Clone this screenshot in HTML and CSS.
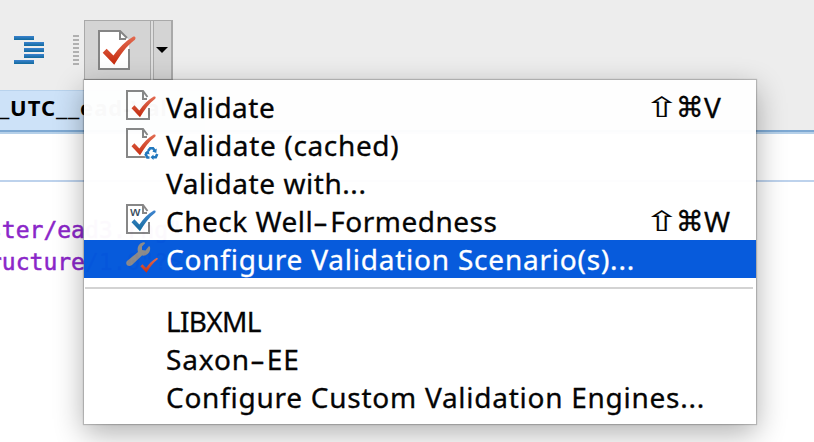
FILE: index.html
```
<!DOCTYPE html>
<html lang="en">
<head>
<meta charset="utf-8">
<title>Validation menu</title>
<link rel="stylesheet" href="styles.css">
</head>
<body>
<svg class="defs" width="0" height="0" aria-hidden="true">
  <defs>
    <linearGradient id="red" x1="0" y1="0" x2="0" y2="1"><stop offset="0" stop-color="#e26a50"/><stop offset="1" stop-color="#c62a0c"/></linearGradient>
    <linearGradient id="blue" x1="0" y1="0" x2="0" y2="1"><stop offset="0" stop-color="#3b82cf"/><stop offset="1" stop-color="#116a9d"/></linearGradient>
    <symbol id="page" viewBox="0 0 24 30"><path d="M1 1H17L23 8V29H1Z" fill="#fff"/><path d="M21.500 7L17 1H1V29H23V18" fill="none" stroke="#858585" stroke-width="2"/><path d="M17 2V9H21" fill="none" stroke="#858585" stroke-width="2"/></symbol>
    <symbol id="check" viewBox="0 0 25 22"><path d="M.5 12.2L3.4 9.3L8.4 14.4C12.5 8.5 17 4 22.8.5C24.5 0 25.2 1.4 24.2 2.7C18 7.2 13.3 14 9 21.2Z"/></symbol>
  </defs>
</svg>
<header class="toolbar">
  <svg class="indent" width="30" height="28"><g fill="url(#blue)"><rect width="20" height="4"/><rect x="10" y="6" width="20" height="4"/><rect x="10" y="12" width="20" height="4"/><rect x="10" y="18" width="20" height="4"/><rect y="24" width="20" height="4"/></g></svg>
  <div class="grip"></div>
  <div class="split">
    <div class="main-button">
      <svg width="40" height="42" viewBox="0 0 40 42"><path d="M1 1H22L31 10V39H1Z" fill="#fff"/><path d="M29 8L22 1H1V39H31V19" fill="none" stroke="#858585" stroke-width="2"/><path d="M22 2V9H28" fill="none" stroke="#858585" stroke-width="2"/><use href="#check" x="4" y="6" width="34" height="30" fill="url(#red)"/></svg>
    </div>
    <div class="drop-button"><svg width="12" height="6"><path d="M0 0H12L6 6Z"/></svg></div>
  </div>
</header>
<div class="tabs"><div class="tab"><span class="under first">_</span><span>UTC</span><span class="under">_</span><span class="under">_</span><span>ead-Val</span></div></div>
<div class="crumbs"></div>
<main class="code"><div>ster/ead3.rng"</div><div>ructure/1.0"?&gt;</div></main>

<nav class="menu">
  <div class="item">
    <svg class="icon" width="40" height="38"><use href="#page" x="0" y="2" width="24" height="30"/><use href="#check" x="5" y="8" width="25" height="22" fill="url(#red)"/></svg>
    <span class="label validate">Validate</span>
    <span class="keys"><i class="shift">⇧</i><i class="cmd">⌘</i><b>V</b></span>
  </div>
  <div class="item">
    <svg class="icon" width="40" height="38"><use href="#page" x="0" y="2" width="24" height="30"/><use href="#check" x="5" y="8" width="25" height="22" fill="url(#red)"/><circle cx="25.500" cy="27" r="7.500" fill="#fff"/><g fill="none" stroke="#1d75bd" stroke-width="2.600"><path d="M22 25L24.200 22.200H27L29 25M31.200 28L29.800 31.200H26M23.500 31.500H21.300L19.800 28.500L21.500 26"/></g><path d="M30.800 22.500L30.300 27L26.300 25.600ZM27.500 28.500V34L24.500 31.300ZM18.800 26.800L22.500 24.300L23.600 28.500Z" fill="#1d75bd"/></svg>
    <span class="label cached">Validate (cached)</span>
  </div>
  <div class="item"><span class="icon"></span><span class="label with">Validate with...</span></div>
  <div class="item">
    <svg class="icon" width="40" height="38"><use href="#page" x="0" y="2" width="24" height="30"/><text class="w" x="4" y="13.500">w</text><use href="#check" x="5" y="8" width="25" height="22" fill="url(#blue)"/></svg>
    <span class="label well">Check Well<span class="dash">-</span>Formedness</span>
    <span class="keys"><i class="shift">⇧</i><i class="cmd">⌘</i><b>W</b></span>
  </div>
  <div class="item selected">
    <svg class="icon" width="40" height="38"><path d="M1 21L12 12C10.500 7 13.500 2.500 18 2.200L19.300 3L16 6.500V10L19.500 10.500L23 6L24 7C25 12 21 16.500 16 15.500L6 25C2.500 27.500-1.500 24.500 1 21Z" fill="#898989"/><use href="#check" x="14" y="17.500" width="18" height="16" fill="url(#red)"/></svg>
    <span class="label scenario">Configure Validation Scenario(s)...</span>
  </div>
  <div class="separator"></div>
  <div class="item"><span class="icon"></span><span class="label lib">LIBXML</span></div>
  <div class="item"><span class="icon"></span><span class="label saxon">Saxon<span class="dash">-</span>EE</span></div>
  <div class="item"><span class="icon"></span><span class="label custom">Configure Custom Validation Engines...</span></div>
</nav>
</body>
</html>
```
FILE: styles.css
```
* { box-sizing: border-box; }
body { margin: 0; width: 814px; height: 442px; overflow: hidden; position: relative; background: #fff; font-family: "Noto Sans", sans-serif; }
.defs { position: absolute; }
.toolbar { height: 90px; background: #ededed; display: flex; align-items: flex-start; padding-left: 14px; }
.indent { margin-top: 36px; }
.grip { width: 6px; height: 30px; margin: 35px 5px 0 29px; background: repeating-linear-gradient(#b0b0b0 0 2px, transparent 2px 4px); }
.split { margin-top: 20px; height: 60px; display: flex; gap: 2px; border-top: 1px solid #a9a9a9; background: #dedede; }
.main-button { width: 67px; border: 1px solid #a9a9a9; border-top: 0; background: #d4d4d4; padding: 9px 0 0 13px; }
.drop-button { width: 20px; border: 1px solid #a9a9a9; border-right-width: 2px; border-top: 0; background: #d4d4d4; padding: 26px 0 0 2px; }
.split svg { display: block; }
.tabs { height: 44px; background: #ededed; border-bottom: 2px solid #b5d0e9; }
.tab { height: 42px; display: flex; border-bottom: 2px solid #7ea9d3; background: linear-gradient(#b9d3ed, #b9d3ed) 0 0 / 205px 1px no-repeat, linear-gradient(90deg, #cde2f8 0 205px, #ededed 205px); font-size: 22px; line-height: 34px; font-weight: 700; letter-spacing: 1px; }
.under { width: 12px; transform: scaleX(1.25); transform-origin: 0 0; letter-spacing: 0; }
.under.first { margin-left: -2px; }
.crumbs { height: 48px; border-bottom: 2px solid #bdd2ec; }
.code { margin: 32px 0 0 -12px; font: 23px/32px "DejaVu Sans Mono", monospace; color: #8b26c9; -webkit-text-stroke: .5px #8b26c9; }
.menu { position: absolute; left: 84px; top: 80px; width: 672px; height: 344px; padding: 8px 0; background: #fff; opacity: .975; box-shadow: 0 0 1px 1px rgba(0,0,0,.2), 0 9px 28px rgba(0,0,0,.32); }
.item { height: 38px; display: flex; color: #000; font-size: 28px; line-height: 39px; padding-left: 42px; white-space: pre; -webkit-text-stroke: .3px currentColor; }
.icon { flex: none; width: 40px; }
.validate { letter-spacing: .5px; }
.cached { letter-spacing: .65px; }
.with { letter-spacing: .55px; }
.well { letter-spacing: .5px; }
.scenario { letter-spacing: .78px; }
.lib { letter-spacing: -.7px; }
.saxon { letter-spacing: .85px; }
.custom { letter-spacing: .74px; }
.dash { display: inline-block; width: 17px; transform: scaleX(1.65); transform-origin: 0 50%; letter-spacing: 0; }
.selected { background: #0258dc; color: #fff; }
.keys { margin-left: auto; width: 106px; display: flex; }
.keys i { font-family: "DejaVu Sans"; font-style: normal; }
.keys b { font-weight: 400; }
.shift { width: 26px; -webkit-text-stroke: 0; transform: scale(1.55, 1); transform-origin: 12px 50%; }
.cmd { width: 28px; }
.w { font: 500 13px "Noto Sans"; fill: #34495b; -webkit-text-stroke: 0; }
.separator { height: 24px; margin: 0 3px 0 1px; padding-top: 9px; }
.separator::before { content: ""; display: block; height: 2px; background: #d2d2d2; }
```
